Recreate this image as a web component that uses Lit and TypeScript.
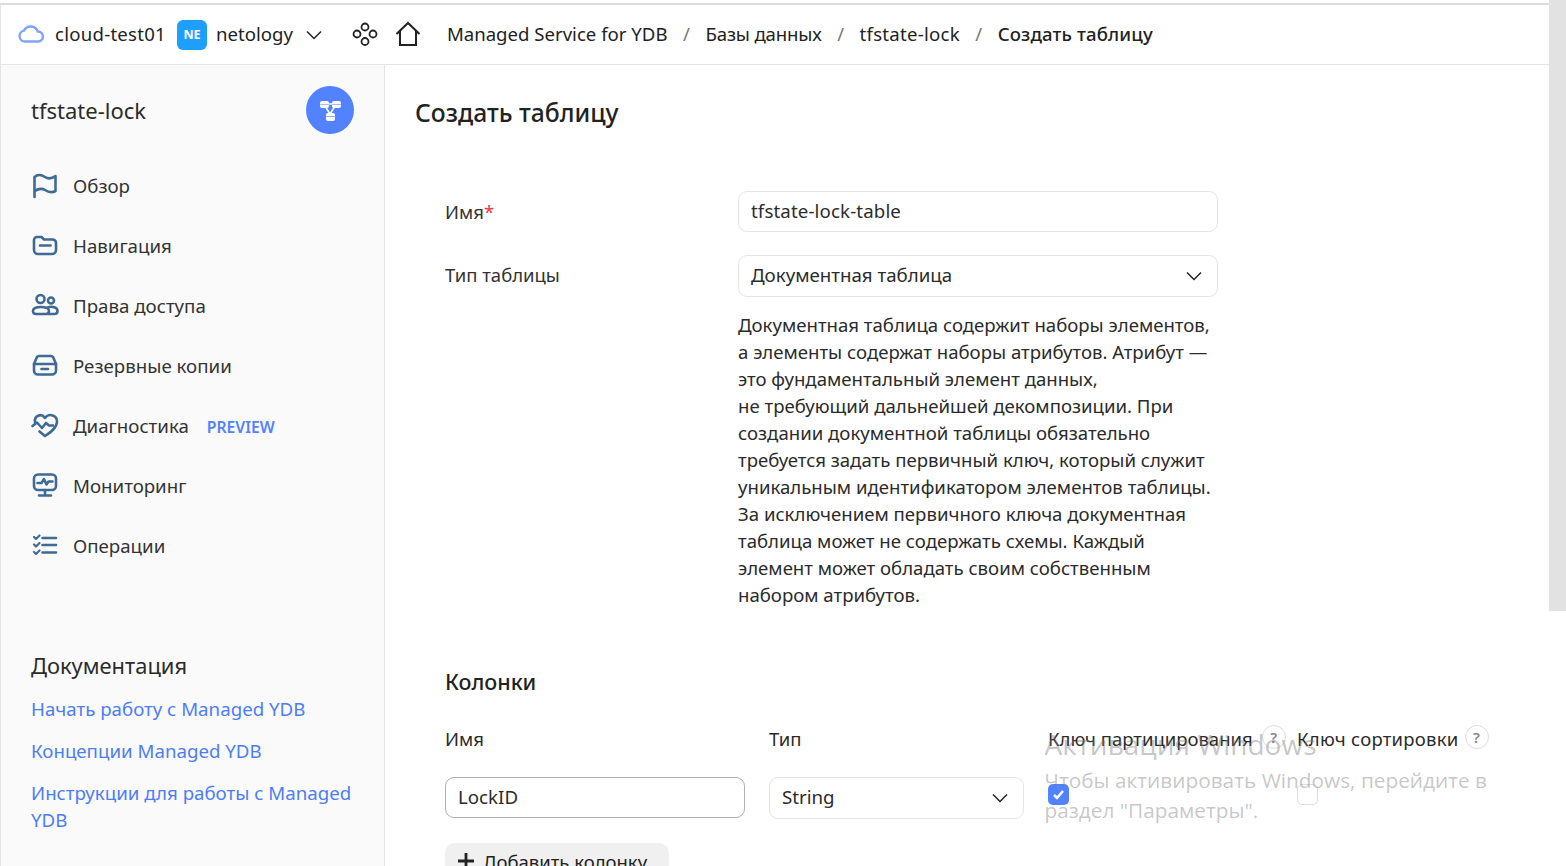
import { LitElement, html, css, svg } from "lit";
import { customElement } from "lit/decorators.js";

const NAV_ICONS = {
  flag: svg`<path d="M3.500 26V6C7 3 11 4 14 6S21 7.500 24.500 5V20C21 22 17 21 14 19S7 18 3.500 20"/>`,
  folder: svg`<path d="M3 19V9A3 3 0 0 1 6 6H10.500L13 8.500H21.500A3.500 3.500 0 0 1 25 12V19A4 4 0 0 1 21 23H7A4 4 0 0 1 3 19Z"/><path d="M9 14.500H19.500"/>`,
  people: svg`<circle cx="9.500" cy="8" r="4"/><circle cx="20" cy="9.500" r="3"/><path d="M2 20C2 17.500 5.500 16 10 16S18 17.500 18 20C18 22 17 23 15 23H5C3 23 2 22 2 20Z"/><path d="M17 16.200C21.500 15 26.500 16.500 26.500 20C26.500 22 25.500 23 23.500 23H17"/>`,
  box: svg`<path d="M8.500 5H19.500A3 3 0 0 1 22.500 7L25 13V19.500A4 4 0 0 1 21 23.500H7A4 4 0 0 1 3 19.500V13L5.500 7A3 3 0 0 1 8.500 5Z"/><path d="M3 13H25"/><path d="M10.500 18H17"/>`,
  heart: svg`<path d="M4 11C3 5 10 1.500 14 7C18 1.500 26.500 4.500 26 11C25.500 17 20 21 14 25L8.500 20.500"/><path d="M1.500 15L6 11.500L11 17L15 12L18 14.500H22"/>`,
  monitor: svg`<rect x="3" y="3.500" width="22" height="15.500" rx="4"/><path d="M14 19V24M8 24.500H20"/><path d="M6.500 12H10.500L13 8L15.500 13.500L17.500 10.500H21.500"/>`,
  list: svg`<path d="M11.500 7H25M11.500 14H25M11.500 21.500H25"/><path d="M3 6L5 8L8.500 4.500M3 13.500L5 15.500L8.500 12M3 21L5 23L8.500 19.500" stroke-width="2.200"/>`,
};

const NAV_ITEMS: { icon: keyof typeof NAV_ICONS; label: string; badge?: string }[] = [
  { icon: "flag", label: "Обзор" },
  { icon: "folder", label: "Навигация" },
  { icon: "people", label: "Права доступа" },
  { icon: "box", label: "Резервные копии" },
  { icon: "heart", label: "Диагностика", badge: "PREVIEW" },
  { icon: "monitor", label: "Мониторинг" },
  { icon: "list", label: "Операции" },
];

const DOC_LINKS = [
  "Начать работу с Managed YDB",
  "Концепции Managed YDB",
  "Инструкции для работы с Managed YDB",
];

const DESCRIPTION = [
  "Документная таблица содержит наборы элементов,",
  "а элементы содержат наборы атрибутов. Атрибут —",
  "это фундаментальный элемент данных,",
  "не требующий дальнейшей декомпозиции. При",
  "создании документной таблицы обязательно",
  "требуется задать первичный ключ, который служит",
  "уникальным идентификатором элементов таблицы.",
  "За исключением первичного ключа документная",
  "таблица может не содержать схемы. Каждый",
  "элемент может обладать своим собственным",
  "набором атрибутов.",
];

const chevron = html`<svg class="chevron in-control" viewBox="0 0 18 18"><path d="M2 5.500L9 12.500L16 5.500"/></svg>`;

@customElement("app-root")
export class AppRoot extends LitElement {
  static styles = css`
    :host {
      display: block;
      position: relative;
      width: 1566px;
      height: 866px;
      overflow: hidden;
      background: #fff;
      color: #222;
      font-family: "Noto Sans", "Open Sans", sans-serif;
      font-size: 18px;
    }
    .frame {
      margin-top: 3px;
      width: 1549px;
      height: 863px;
      border-top: 2px solid #dcdcdc;
      box-sizing: border-box;
      display: flex;
      flex-direction: column;
    }
    header {
      height: 60px;
      flex: none;
      box-sizing: border-box;
      border-bottom: 1px solid #e5e5e5;
      border-left: 1px solid #e5e5e5;
      display: flex;
      align-items: center;
      padding-left: 18px;
      font-size: 18.600px;
      white-space: nowrap;
    }
    .t { padding-bottom: 2px; }
    .ru { letter-spacing: -0.15px; }
    .lat { letter-spacing: 0.25px; }
    .cloud { width: 26px; height: 20px; fill: none; stroke: #7da3ff; stroke-width: 2.400; margin: 0 11px 3px -1px; }
    .avatar {
      width: 30px;
      height: 30px;
      border-radius: 6px;
      background: #1e9fff;
      color: #fff;
      font-size: 12.500px;
      font-weight: 700;
      display: flex;
      align-items: center;
      justify-content: center;
      margin: 0 9px 0 11px;
    }
    .chevron { width: 18px; height: 18px; fill: none; stroke: #222; stroke-width: 1.500; }
    .chevron.in-control { margin-right: 2px; margin-bottom: -2px; }
    .services { width: 26px; height: 26px; fill: none; stroke: #222; stroke-width: 1.800; margin: 0 0 2px 29px; }
    .home { width: 26px; height: 26px; fill: none; stroke: #222; stroke-width: 2; margin: 0 26px 2px 17px; }
    .crumb-sep { color: #777; margin: 0 15.500px; }
    .crumb-current { font-weight: 500; letter-spacing: 0.12px; }
    .body { flex: 1; display: flex; min-height: 0; }
    aside {
      width: 385px;
      flex: none;
      box-sizing: border-box;
      background: #fafafa;
      border-right: 1px solid #e5e5e5;
      border-left: 1px solid #e5e5e5;
      padding: 21px 30px 0 30px;
    }
    .db { display: flex; align-items: center; justify-content: space-between; height: 48px; font-size: 22px; color: #2b2b2b; }
    .db-badge {
      width: 48px;
      height: 48px;
      border-radius: 50%;
      background: #5282ff;
      display: flex;
      align-items: center;
      justify-content: center;
    }
    .db-badge svg { width: 26px; height: 26px; }
    nav { margin-top: 21px; display: flex; flex-direction: column; }
    .nav-item { display: flex; align-items: center; height: 60px; font-size: 18.700px; color: #333; }
    .nav-item svg {
      width: 28px;
      height: 28px;
      margin-right: 14px;
      fill: none;
      stroke: #3f6a94;
      stroke-width: 2.600;
      stroke-linecap: round;
      stroke-linejoin: round;
    }
    .badge { margin-left: 18px; padding-top: 3px; color: #5282ff; font-size: 15.700px; font-weight: 600; }
    .docs { margin-top: 76px; }
    .docs h3 { margin: 0 0 14px; font-size: 21.900px; line-height: 30px; font-weight: 400; color: #2b2b2b; }
    .docs a { display: block; color: #4d7df5; font-size: 18.700px; line-height: 27px; margin-bottom: 15px; }
    main { flex: 1; min-width: 0; padding: 30px 0 0 30px; }
    h1 { margin: 0; font-size: 24.700px; line-height: 36px; font-weight: 500; color: #222; }
    .form { margin: 60px 0 0 30px; width: 773px; display: grid; grid-template-columns: 293px 480px; row-gap: 23px; }
    .label { line-height: 41px; font-size: 18.500px; color: #333; }
    .label.up { line-height: 39px; }
    .req { color: #e34; }
    .control {
      box-sizing: border-box;
      height: 41px;
      border: 1px solid #e5e5e5;
      border-radius: 9px;
      padding: 0 12px 2px;
      display: flex;
      align-items: center;
      justify-content: space-between;
      font-size: 18.700px;
      color: #2b2b2b;
    }
    .control .lat { letter-spacing: 0.12px; }
    .tall { height: 42px; padding-bottom: 3px; }
    .strong { border-color: #b0b0b0; }
    .description { margin: 0 0 0 323px; width: 480px; }
    .desc { margin: 0; padding-top: 14px; font-size: 18.600px; line-height: 27px; color: #2b2b2b; white-space: nowrap; }
    .columns { margin: 59px 0 0 30px; }
    h2 { margin: 0; font-size: 21.500px; line-height: 30px; font-weight: 500; color: #222; }
    .col-grid {
      margin-top: 28px;
      display: grid;
      grid-template-columns: 300px 255px 225px 200px;
      column-gap: 24px;
      font-size: 18.500px;
    }
    .head { height: 52px; display: flex; align-items: flex-start; line-height: 27px; white-space: nowrap; color: #2b2b2b; }
    .wide { letter-spacing: 0.25px; }
    .help {
      width: 24px;
      height: 24px;
      box-sizing: border-box;
      flex: none;
      margin: 0 0 0 9px;
      border: 1.500px solid #ddd;
      border-radius: 50%;
      font-size: 15px;
      font-weight: 600;
      color: #888;
      display: flex;
      align-items: center;
      justify-content: center;
    }
    .wide + .help { margin-left: 6px; }
    .cell { display: flex; align-items: flex-start; padding-top: 7px; }
    .check { width: 21px; height: 21px; box-sizing: border-box; border-radius: 5px; border: 1px solid #ddd; }
    .check.on { background: #5282ff; border: none; display: flex; align-items: center; justify-content: center; }
    .check svg { width: 13px; height: 13px; fill: none; stroke: #fff; stroke-width: 2.500; }
    .add {
      margin-top: 24px;
      width: 224px;
      height: 36px;
      box-sizing: border-box;
      background: #f0f0f0;
      border-radius: 10px 10px 0 0;
      display: flex;
      align-items: center;
      gap: 8px;
      padding-left: 12px;
      font-size: 18.500px;
    }
    .add svg { width: 18px; height: 18px; stroke: #222; stroke-width: 2.800; }
    .thumb { position: absolute; right: 0; top: 0; width: 17px; height: 611px; background: #e2e2e2; }
    .watermark {
      position: absolute;
      left: 1044.500px;
      top: 724px;
      color: rgba(120, 120, 120, 0.42);
      font-family: "Open Sans", sans-serif;
      font-size: 20.800px;
      line-height: 30px;
      pointer-events: none;
    }
    .watermark b { display: block; font-weight: 400; font-size: 28px; line-height: 40px; margin-bottom: 1px; }
  `;

  render() {
    return html`
      <div class="frame">
        <header>
          <svg class="cloud" viewBox="0 0 26 20"><path d="M7 18.500A5.500 5.500 0 0 1 6 7.600A7.500 7.500 0 0 1 19.800 8.500A5 5 0 0 1 20 18.500Z"/></svg>
          <span class="t lat">cloud-test01</span>
          <span class="avatar">NE</span>
          <span class="t">netology</span>
          <svg class="chevron" style="margin-left:12px" viewBox="0 0 18 18"><path d="M2 5.500L9 12.500L16 5.500"/></svg>
          <svg class="services" viewBox="0 0 26 26"><circle cx="13" cy="6" r="3.500"/><circle cx="5" cy="13" r="3.500"/><circle cx="21" cy="13" r="3.500"/><circle cx="13" cy="20.500" r="3.500"/></svg>
          <svg class="home" viewBox="0 0 26 26"><path d="M1.500 13L13 2L24.500 13"/><path d="M5 10V24H21V10"/></svg>
          <span class="t">Managed Service for YDB</span>
          <span class="t crumb-sep">/</span>
          <span class="t ru">Базы данных</span>
          <span class="t crumb-sep">/</span>
          <span class="t lat">tfstate-lock</span>
          <span class="t crumb-sep">/</span>
          <span class="t crumb-current">Создать таблицу</span>
        </header>
        <div class="body">
          <aside>
            <div class="db">
              <span>tfstate-lock</span>
              <span class="db-badge">
                <svg viewBox="0 0 26 26">
                  <path d="M8 9L13 17M18 9L13 17M10 7H16" fill="none" stroke="#fff" stroke-width="1.500"/>
                  <rect x="3" y="4" width="9" height="7" rx="2" fill="#fff"/>
                  <rect x="15" y="4" width="9" height="7" rx="2" fill="#fff"/>
                  <rect x="9" y="16" width="9" height="8" rx="2" fill="#fff"/>
                  <path d="M3 7.400H12M15 7.400H24M9 19.500H18" stroke="#5282ff" stroke-width="0.600"/>
                </svg>
              </span>
            </div>
            <nav>
              ${NAV_ITEMS.map(
                (item) => html`
                  <div class="nav-item">
                    <svg viewBox="0 0 28 28">${NAV_ICONS[item.icon]}</svg>
                    <span>${item.label}</span>
                    ${item.badge ? html`<span class="badge">${item.badge}</span>` : ""}
                  </div>
                `
              )}
            </nav>
            <div class="docs">
              <h3>Документация</h3>
              ${DOC_LINKS.map((link) => html`<a>${link}</a>`)}
            </div>
          </aside>
          <main>
            <h1>Создать таблицу</h1>
            <div class="form">
              <div class="label">Имя<span class="req">*</span></div>
              <div class="control"><span class="lat">tfstate-lock-table</span></div>
              <div class="label up">Тип таблицы</div>
              <div class="control tall">Документная таблица ${chevron}</div>
            </div>
            <div class="description">
              <p class="desc">${DESCRIPTION.map((line) => html`${line}<br />`)}</p>
            </div>
            <div class="columns">
              <h2>Колонки</h2>
              <div class="col-grid">
                <div class="head">Имя</div>
                <div class="head">Тип</div>
                <div class="head">Ключ партицирования<span class="help">?</span></div>
                <div class="head"><span class="wide">Ключ сортировки</span><span class="help">?</span></div>
                <div class="control strong">LockID</div>
                <div class="control tall">String ${chevron}</div>
                <div class="cell"><span class="check on"><svg viewBox="0 0 13 13"><path d="M2 7L5 10L11 3"/></svg></span></div>
                <div class="cell"><span class="check"></span></div>
              </div>
              <div class="add">
                <svg viewBox="0 0 18 18"><path d="M9 1V17M1 9H17"/></svg>
                <span>Добавить колонку</span>
              </div>
            </div>
          </main>
        </div>
      </div>
      <div class="thumb"></div>
      <div class="watermark">
        <b>Активация Windows</b>
        Чтобы активировать Windows, перейдите в<br />раздел "Параметры".
      </div>
    `;
  }
}
